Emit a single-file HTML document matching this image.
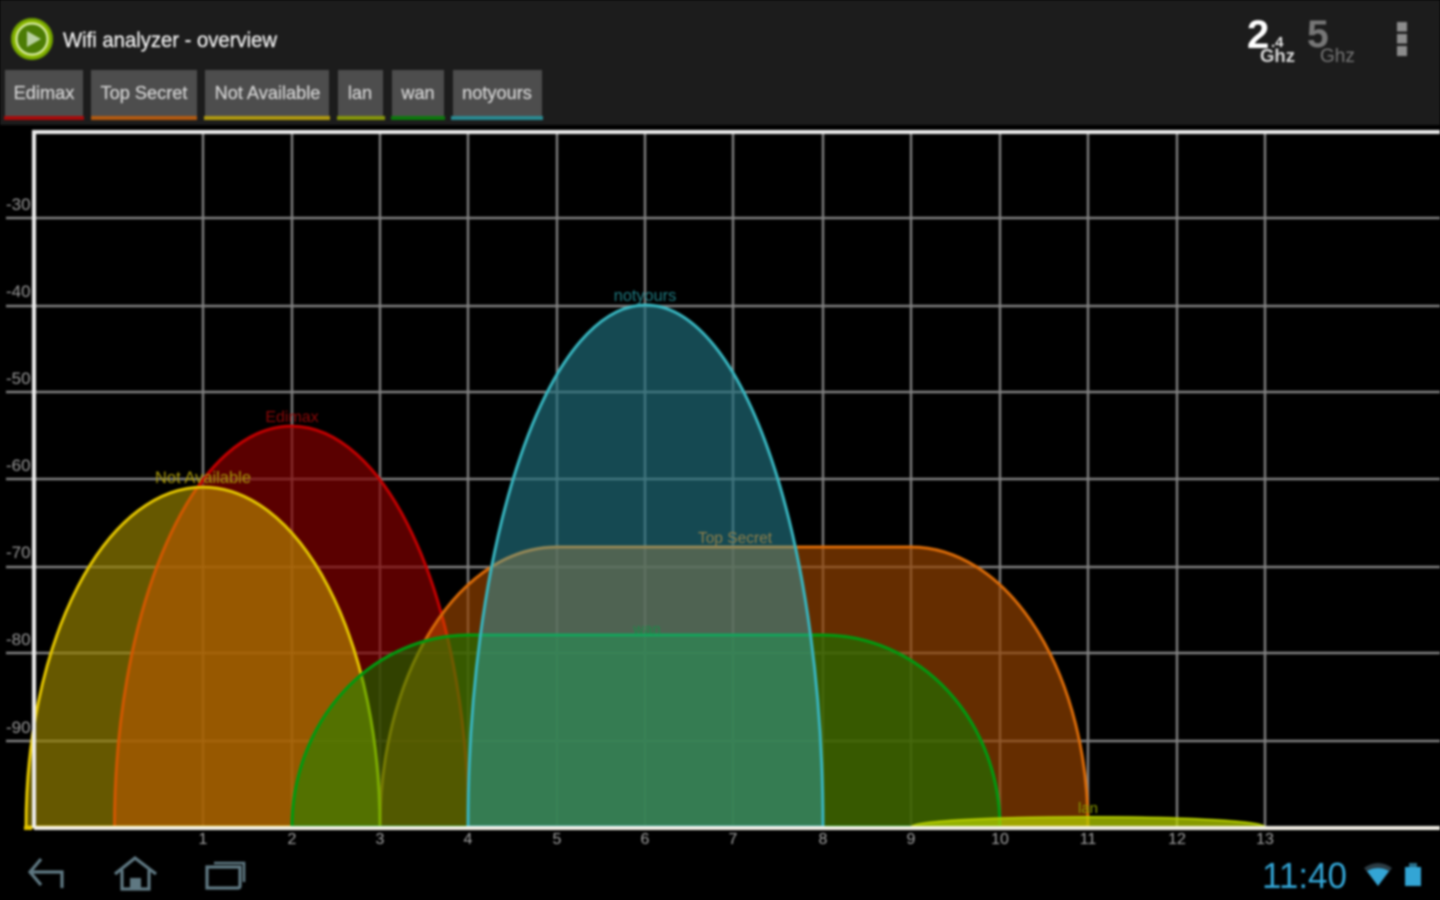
<!DOCTYPE html>
<html>
<head>
<meta charset="utf-8">
<title>Wifi analyzer - overview</title>
<style>
html,body{margin:0;padding:0;background:#000;width:1440px;height:900px;overflow:hidden}
svg{display:block;filter:blur(1px)}
text{font-family:"Liberation Sans",sans-serif}
</style>
</head>
<body>
<svg width="1440" height="900" viewBox="0 0 1440 900" xmlns="http://www.w3.org/2000/svg">
<rect width="1440" height="900" fill="#000"/>
<rect width="1440" height="125" fill="#1c1c1c"/>

<!-- App icon -->
<circle cx="32" cy="39" r="21" fill="#8cb800"/>
<circle cx="32" cy="39" r="20" fill="none" stroke="#6a9a00" stroke-width="2"/>
<circle cx="32" cy="39" r="15.5" fill="#4c7c04" stroke="#d4e8a0" stroke-width="2.2"/>
<path d="M27 31 L41 39 L27 47 Z" fill="#b8d0a0"/>
<text x="63" y="47" font-size="21.5" fill="#f0f0f0" stroke="#f0f0f0" stroke-width=".3" textLength="214" lengthAdjust="spacingAndGlyphs">Wifi analyzer - overview</text>

<!-- Tabs -->
<g fill="#4d4d4d">
<rect x="5" y="70" width="78" height="46"/>
<rect x="91" y="70" width="106" height="46"/>
<rect x="205" y="70" width="124" height="46"/>
<rect x="338" y="70" width="45" height="46"/>
<rect x="392" y="70" width="52" height="46"/>
<rect x="453" y="70" width="89" height="46"/>
</g>
<rect x="4" y="116" width="80" height="4" fill="#a80a0a"/>
<rect x="91" y="116" width="106" height="4" fill="#b35a10"/>
<rect x="204" y="116" width="126" height="4" fill="#b09a10"/>
<rect x="337" y="116" width="48" height="4" fill="#86960a"/>
<rect x="391" y="116" width="54" height="4" fill="#0c780c"/>
<rect x="451" y="116" width="92" height="4" fill="#2a8a92"/>
<g font-size="18.200" fill="#d4d4d4" stroke="#d4d4d4" stroke-width=".25" text-anchor="middle">
<text x="44" y="99">Edimax</text>
<text x="144" y="99">Top Secret</text>
<text x="267.500" y="99">Not Available</text>
<text x="360" y="99">lan</text>
<text x="418" y="99">wan</text>
<text x="497" y="99">notyours</text>
</g>

<!-- Band selectors -->
<text x="1247" y="48" font-size="40" font-weight="bold" fill="#fff">2</text>
<text x="1271" y="47" font-size="15" font-weight="bold" fill="#e8e8e8">.4</text>
<text x="1260" y="62" font-size="18.500" font-weight="bold" fill="#d8d8d8">Ghz</text>
<text x="1307" y="47" font-size="39" font-weight="bold" fill="#777">5</text>
<text x="1320" y="62" font-size="19" fill="#777">Ghz</text>
<g fill="#8c8c8c">
<rect x="1397" y="22" width="10" height="9.500"/>
<rect x="1397" y="34" width="10" height="9.500"/>
<rect x="1397" y="46" width="10" height="10"/>
</g>

<!-- Grid -->
<g stroke="#808080" stroke-width="2.400" fill="none">
<path d="M203 131V827M292 131V827M380 131V827M468 131V827M557 131V827M645 131V827M733 131V827M823 131V827M911 131V827M1000 131V827M1088 131V827M1177 131V827M1265 131V827"/>
<path d="M6 218H1440M6 306H1440M6 392H1440M6 479H1440M6 567H1440M6 653H1440M6 741H1440"/>
</g>

<!-- Axis labels -->
<g font-size="17" fill="#989898">
<text x="6" y="210">-30</text>
<text x="6" y="297">-40</text>
<text x="6" y="384">-50</text>
<text x="6" y="471">-60</text>
<text x="6" y="558">-70</text>
<text x="6" y="645">-80</text>
<text x="6" y="733">-90</text>
</g>
<g font-size="16" fill="#a4a4a4" text-anchor="middle">
<text x="203" y="844">1</text>
<text x="292" y="844">2</text>
<text x="380" y="844">3</text>
<text x="468" y="844">4</text>
<text x="557" y="844">5</text>
<text x="645" y="844">6</text>
<text x="733" y="844">7</text>
<text x="823" y="844">8</text>
<text x="911" y="844">9</text>
<text x="1000" y="844">10</text>
<text x="1088" y="844">11</text>
<text x="1177" y="844">12</text>
<text x="1265" y="844">13</text>
</g>

<!-- Dim the grid beneath the curves -->
<g fill="rgba(0,0,0,.4)">
<path d="M114.500 827A177 401 0 0 1 468.500 827Z"/>
<path d="M380 827A177 280 0 0 1 557 547H911A177 280 0 0 1 1088 827Z"/>
<path d="M26 827A177 340 0 0 1 380 827Z"/>
<path d="M292 827A177 192 0 0 1 469 635H823A177 192 0 0 1 1000 827Z"/>
<path d="M468 827A177.500 522 0 0 1 823 827Z"/>
</g>

<!-- Curves -->
<g stroke-width="3">
<path d="M114.500 827A177 401 0 0 1 468.500 827Z" fill="rgba(200,0,0,.45)" stroke="#c80000" stroke-opacity=".95"/>
<path d="M380 827A177 280 0 0 1 557 547H911A177 280 0 0 1 1088 827Z" fill="rgba(225,100,0,.45)" stroke="#d86a08"/>
<path d="M26 827A177 340 0 0 1 380 827Z" fill="rgba(226,196,0,.45)" stroke="#e2c400"/>
<path d="M292 827A177 192 0 0 1 469 635H823A177 192 0 0 1 1000 827Z" fill="rgba(0,144,0,.45)" stroke="#009a10"/>
<path d="M468 827A177.500 522 0 0 1 823 827Z" fill="rgba(50,175,195,.42)" stroke="#38b4be"/>
<path d="M911 827A177 10 0 0 1 1088 817A177 10 0 0 1 1265 827Z" fill="rgba(180,205,0,.75)" stroke="#b4cc00" stroke-width="2"/>
</g>

<!-- Axis frame, on top of curves -->
<g stroke="#ececec" fill="none">
<path d="M1440 132H34V828" stroke-width="4"/>
<path d="M34 828H1440" stroke-width="4" stroke="#f2efe6"/>
</g>
<path d="M24 828H32" stroke="#e2c400" stroke-width="4"/>

<!-- Curve labels -->
<g text-anchor="middle">
<text x="292" y="422" font-size="16" fill="#8f0808">Edimax</text>
<text x="203" y="483" font-size="16.500" fill="#a89808">Not Available</text>
<text x="645" y="301" font-size="16.300" fill="#1f7a80">notyours</text>
<text x="735" y="543" font-size="15.500" fill="#92804a">Top Secret</text>
<text x="647" y="634" font-size="15" fill="#1a8a48">wan</text>
<text x="1088" y="813" font-size="15" fill="#8a9a00">lan</text>
</g>

<!-- Nav icons -->
<g fill="none" stroke="#5f7882" stroke-width="3.200">
<path d="M41 859L30 872L41 885M30 872H62V888"/>
<path d="M115 874L135 858L156 874"/>
<path d="M122 870V889H149V870"/>
<path d="M207 867H240V886Q240 888 238 888H207Z"/>
<path d="M214 863H244V882" stroke-width="2.600"/>
</g>
<rect x="130" y="878" width="11" height="11" fill="#5f7882"/>

<!-- Status -->
<text x="1262" y="888" font-size="36" fill="#33a5d5" textLength="85" lengthAdjust="spacingAndGlyphs">11:40</text>
<path d="M1364 868Q1378 858 1392 868L1378 886Z" fill="#2c3c44"/>
<path d="M1367 871Q1378 865 1389 871L1378 886Z" fill="#33a5d5"/>
<rect x="1405" y="867" width="16" height="19" fill="#33a5d5"/>
<rect x="1409" y="863" width="8" height="4" fill="#2a6f8a"/>
</svg>
</body>
</html>
